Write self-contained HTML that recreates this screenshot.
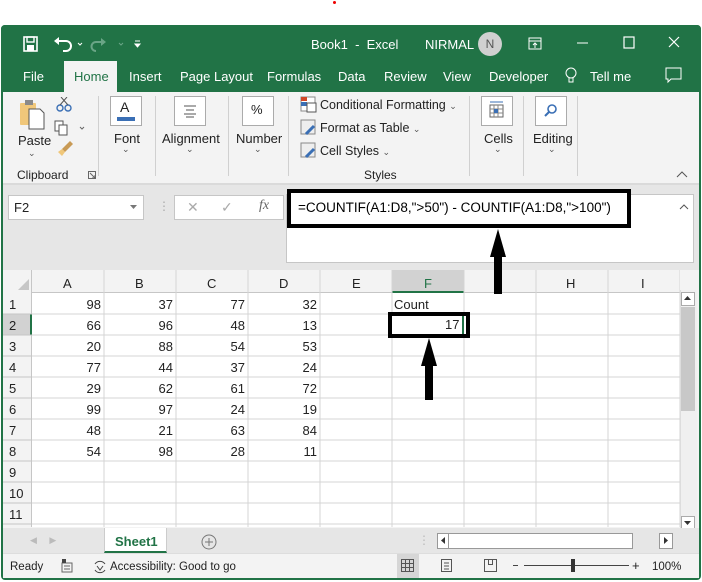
<!DOCTYPE html>
<html><head><style>
*{box-sizing:border-box;margin:0;padding:0}
body{width:702px;height:582px;background:#fff;font-family:"Liberation Sans",sans-serif;font-size:12px;color:#222;position:relative;overflow:hidden}
.a{position:absolute}
.t{position:absolute;white-space:nowrap}
.box{position:absolute;background:#fff;border:1px solid #ababab}
</style></head><body>
<div class="a" style="left:333px;top:1px;width:3px;height:3px;background:#e00;border-radius:50%"></div>
<div class="a" style="left:1px;top:25px;width:700px;height:555px;border:2px solid #217346;border-radius:4px;background:#f3f3f3"></div>
<div class="a" style="left:1px;top:25px;width:700px;height:67px;background:#217346;border-radius:4px 4px 0 0"></div>
<svg class="a" style="left:22px;top:34px" width="130" height="20" viewBox="0 0 130 20">
<rect x="2" y="3" width="13" height="14" fill="none" stroke="#fff" stroke-width="1.6"/><rect x="5" y="3" width="7" height="5" fill="none" stroke="#fff" stroke-width="1.4"/><rect x="5" y="11" width="7" height="6" fill="#fff"/>
<path d="M36 7 h8 a5 5 0 0 1 0 10 h-3" fill="none" stroke="#fff" stroke-width="2"/><path d="M32 7 l5-4 v8z" fill="#fff"/>
<path d="M56 9 l2 2 2-2" fill="none" stroke="#fff" stroke-width="1"/>
<path d="M80 8 h-6 a4 4 0 0 0 0 9" fill="none" stroke="#6aa586" stroke-width="2"/><path d="M84 8 l-5-4 v8z" fill="#6aa586"/>
<path d="M97 9 l2 2 2-2" fill="none" stroke="#6aa586" stroke-width="1"/>
<path d="M113 7 h5 M113 10 l2.5 3 2.5-3z" stroke="#fff" fill="#fff"/>
</svg>
<div class="t" style="left:311px;top:37px;color:#fff;font-size:13px">Book1 &nbsp;-&nbsp; Excel</div>
<div class="t" style="left:425px;top:37px;color:#fff;font-size:13px">NIRMAL</div>
<div class="a" style="left:478px;top:32px;width:24px;height:24px;border-radius:50%;background:#d0d0d0;color:#555;text-align:center;line-height:24px;font-size:12px">N</div>
<svg class="a" style="left:526px;top:34px" width="170" height="20"><rect x="3" y="4" width="12" height="11" fill="none" stroke="#fff"/><path d="M3 7h12M9 14V9M7 11l2-2 2 2" stroke="#fff" fill="none"/><path d="M51 9h11" stroke="#fff"/><rect x="98" y="3" width="10" height="11" fill="none" stroke="#fff" stroke-width="1.2"/><path d="M143 3l10 10M153 3l-10 10" stroke="#fff" stroke-width="1.2"/></svg>
<div class="a" style="left:64px;top:61px;width:53px;height:31px;background:#f3f3f3"></div>
<div class="t" style="left:23px;top:69px;color:#fff;font-size:13px">File</div>
<div class="t" style="left:74px;top:69px;color:#217346;font-size:13px">Home</div>
<div class="t" style="left:129px;top:69px;color:#fff;font-size:13px">Insert</div>
<div class="t" style="left:180px;top:69px;color:#fff;font-size:13px">Page Layout</div>
<div class="t" style="left:267px;top:69px;color:#fff;font-size:13px">Formulas</div>
<div class="t" style="left:338px;top:69px;color:#fff;font-size:13px">Data</div>
<div class="t" style="left:384px;top:69px;color:#fff;font-size:13px">Review</div>
<div class="t" style="left:443px;top:69px;color:#fff;font-size:13px">View</div>
<div class="t" style="left:489px;top:69px;color:#fff;font-size:13px">Developer</div>
<svg class="a" style="left:563px;top:66px" width="16" height="20"><circle cx="8" cy="7" r="5" fill="none" stroke="#fff"/><path d="M6 12v4h4v-4" stroke="#fff" fill="none"/></svg>
<div class="t" style="left:590px;top:69px;color:#fff;font-size:13px">Tell me</div>
<svg class="a" style="left:664px;top:66px" width="20" height="18"><path d="M2 2h15v11h-10l-3 3v-3h-2z" fill="none" stroke="#fff"/></svg>
<div class="a" style="left:3px;top:183px;width:696px;height:2px;background:#dadada"></div>
<svg class="a" style="left:18px;top:97px" width="75" height="70">
<rect x="2" y="6" width="16" height="22" fill="#f0c77a" rx="1"/><rect x="7" y="3" width="8" height="5" fill="#8a8a8a"/><path d="M11 12h11l4 4v16h-15z" fill="#fff" stroke="#555"/>
<circle cx="42" cy="11" r="3" fill="none" stroke="#3a6fb5" stroke-width="1.4"/><circle cx="50" cy="11" r="3" fill="none" stroke="#3a6fb5" stroke-width="1.4"/><path d="M42 8l7-8M50 8l-7-8" stroke="#555"/>
<rect x="37" y="24" width="8" height="10" fill="#fff" stroke="#555"/><rect x="41" y="28" width="8" height="10" fill="#fff" stroke="#555"/><path d="M62 30l2 2 2-2" stroke="#666" fill="none"/>
<path d="M44 52l8-8 3 3-8 8z" fill="#c89a55"/><path d="M40 55l4-3 3 3-3 4z" fill="#f0c77a"/>
</svg>
<div class="t" style="left:18px;top:133px;font-size:13px">Paste</div>
<div class="t" style="left:28px;top:148px;font-size:9px;color:#555">⌄</div>
<div class="t" style="left:17px;top:168px;font-size:12px">Clipboard</div>
<svg class="a" style="left:88px;top:171px" width="8" height="8"><rect x="0.5" y="0.5" width="7" height="7" fill="none" stroke="#666"/><path d="M2 2l5 5M4 7h3V4" stroke="#666" fill="none"/></svg>
<div class="a" style="left:98px;top:96px;width:1px;height:80px;background:#d0d0d0"></div>
<div class="box" style="left:110px;top:96px;width:32px;height:30px"></div>
<div class="t" style="left:120px;top:99px;font-size:14px">A</div>
<div class="a" style="left:117px;top:117px;width:18px;height:4px;background:#3a6fb5"></div>
<div class="t" style="left:114px;top:131px;font-size:13px">Font</div>
<div class="t" style="left:122px;top:144px;font-size:9px;color:#555">⌄</div>
<div class="a" style="left:155px;top:96px;width:1px;height:80px;background:#d0d0d0"></div>
<div class="box" style="left:174px;top:96px;width:32px;height:30px"></div>
<svg class="a" style="left:182px;top:104px" width="16" height="14"><path d="M2 2h12M4 6h8M2 10h12M4 13h8" stroke="#555"/></svg>
<div class="t" style="left:162px;top:131px;font-size:13px">Alignment</div>
<div class="t" style="left:186px;top:144px;font-size:9px;color:#555">⌄</div>
<div class="a" style="left:228px;top:96px;width:1px;height:80px;background:#d0d0d0"></div>
<div class="box" style="left:242px;top:96px;width:32px;height:30px"></div>
<div class="t" style="left:251px;top:102px;font-size:13px">%</div>
<div class="t" style="left:236px;top:131px;font-size:13px">Number</div>
<div class="t" style="left:254px;top:144px;font-size:9px;color:#555">⌄</div>
<div class="a" style="left:288px;top:96px;width:1px;height:80px;background:#d0d0d0"></div>
<svg class="a" style="left:300px;top:96px" width="18" height="66">
<rect x="1" y="1" width="14" height="14" fill="#fff" stroke="#888"/><rect x="1" y="1" width="6" height="4" fill="#d24726"/><rect x="1" y="6" width="6" height="4" fill="#3a6fb5"/><rect x="7" y="7" width="9" height="9" fill="#fff" stroke="#555"/>
<rect x="1" y="24" width="14" height="14" fill="#eee" stroke="#888"/><path d="M6 38l8-8" stroke="#3a6fb5" stroke-width="3"/>
<rect x="1" y="47" width="14" height="14" fill="#eee" stroke="#888"/><path d="M6 61l8-8" stroke="#3a6fb5" stroke-width="3"/>
</svg>
<div class="t" style="left:320px;top:98px;font-size:12.5px">Conditional Formatting <span style="font-size:9px;color:#555">⌄</span></div>
<div class="t" style="left:320px;top:121px;font-size:12.5px">Format as Table <span style="font-size:9px;color:#555">⌄</span></div>
<div class="t" style="left:320px;top:144px;font-size:12.5px">Cell Styles <span style="font-size:9px;color:#555">⌄</span></div>
<div class="t" style="left:364px;top:168px;font-size:12px">Styles</div>
<div class="a" style="left:469px;top:96px;width:1px;height:80px;background:#d0d0d0"></div>
<div class="box" style="left:481px;top:96px;width:32px;height:30px"></div>
<svg class="a" style="left:488px;top:100px" width="18" height="20"><path d="M2 2h13" stroke="#3a6fb5"/><rect x="2" y="5" width="13" height="12" fill="#fff" stroke="#666"/><path d="M2 9h13M2 13h13M6 5v12M10 5v12" stroke="#888"/><rect x="6" y="9" width="4" height="4" fill="#3a6fb5"/></svg>
<div class="t" style="left:484px;top:131px;font-size:13px">Cells</div>
<div class="t" style="left:494px;top:144px;font-size:9px;color:#555">⌄</div>
<div class="a" style="left:523px;top:96px;width:1px;height:80px;background:#d0d0d0"></div>
<div class="box" style="left:535px;top:96px;width:32px;height:30px"></div>
<svg class="a" style="left:542px;top:102px" width="18" height="18"><circle cx="10" cy="7" r="4" fill="none" stroke="#3a6fb5" stroke-width="1.6"/><path d="M7 10l-4 4" stroke="#3a6fb5" stroke-width="2"/></svg>
<div class="t" style="left:533px;top:131px;font-size:13px">Editing</div>
<div class="t" style="left:548px;top:144px;font-size:9px;color:#555">⌄</div>
<div class="a" style="left:577px;top:96px;width:1px;height:80px;background:#d0d0d0"></div>
<svg class="a" style="left:676px;top:170px" width="12" height="8"><path d="M1 7l5-5 5 5" stroke="#555" fill="none"/></svg>
<div class="a" style="left:3px;top:185px;width:696px;height:85px;background:#e6e6e6"></div>
<div class="box" style="left:8px;top:195px;width:136px;height:25px;border-color:#c6c6c6"></div>
<div class="t" style="left:14px;top:200px;font-size:13px">F2</div>
<svg class="a" style="left:130px;top:205px" width="8" height="5"><path d="M0 0h7l-3.5 4z" fill="#777"/></svg>
<div class="t" style="left:158px;top:199px;color:#aaa">⋮</div>
<div class="box" style="left:174px;top:195px;width:110px;height:25px;border-color:#c6c6c6"></div>
<div class="t" style="left:187px;top:199px;color:#aaa;font-size:14px">✕</div>
<div class="t" style="left:221px;top:199px;color:#aaa;font-size:14px">✓</div>
<div class="t" style="left:259px;top:198px;color:#666;font-style:italic;font-family:'Liberation Serif',serif;font-size:14px">fx</div>
<div class="box" style="left:286px;top:194px;width:408px;height:69px;border-color:#c6c6c6"></div>
<div class="a" style="left:287px;top:189px;width:344px;height:39px;border:4px solid #000;background:#fff"></div>
<div class="t" style="left:298px;top:200px;font-size:13.5px;color:#000">=COUNTIF(A1:D8,"&gt;50") - COUNTIF(A1:D8,"&gt;100")</div>
<svg class="a" style="left:679px;top:204px" width="10" height="6"><path d="M1 5l4-4 4 4" stroke="#555" fill="none"/></svg>
<div class="a" style="left:3px;top:270px;width:677px;height:257px;background:#fff"></div>
<div class="a" style="left:3px;top:270px;width:677px;height:23px;background:#f3f3f3;border-bottom:1px solid #c6c6c6"></div>
<div class="a" style="left:3px;top:270px;width:29px;height:257px;background:#f3f3f3;border-right:1px solid #c6c6c6"></div>
<svg class="a" style="left:16px;top:279px" width="14" height="12"><path d="M13 0v11H2z" fill="#c6c6c6"/></svg>
<div class="a" style="left:392px;top:270px;width:72px;height:23px;background:#d2d2d2;border-bottom:2px solid #217346"></div>
<div class="a" style="left:3px;top:314px;width:29px;height:21px;background:#d2d2d2;border-right:2px solid #217346"></div>
<svg class="a" style="left:32px;top:270px" width="648" height="257">
<g stroke="#d4d4d4">
<path d="M72 0v257M144 0v257M216 0v257M288 0v257M360 0v257M432 0v257M504 0v257M576 0v257M648 0v257"/>
<path d="M0 44h648M0 65h648M0 86h648M0 107h648M0 128h648M0 149h648M0 170h648M0 191h648M0 212h648M0 233h648M0 254h648"/>
</g></svg>
<svg class="a" style="left:3px;top:293px" width="29" height="234"><g stroke="#c6c6c6"><path d="M0 21h29M0 42h29M0 63h29M0 84h29M0 105h29M0 126h29M0 147h29M0 168h29M0 189h29M0 210h29M0 231h29"/></g></svg>
<div class="t" style="left:63px;top:276px;font-size:13px">A</div>
<div class="t" style="left:135px;top:276px;font-size:13px">B</div>
<div class="t" style="left:207px;top:276px;font-size:13px">C</div>
<div class="t" style="left:279px;top:276px;font-size:13px">D</div>
<div class="t" style="left:352px;top:276px;font-size:13px">E</div>
<div class="t" style="left:424px;top:276px;font-size:13px;color:#217346">F</div>
<div class="t" style="left:566px;top:276px;font-size:13px">H</div>
<div class="t" style="left:641px;top:276px;font-size:13px">I</div>
<div class="t" style="left:9px;top:294px;font-size:13px;line-height:21px">1<br>2<br>3<br>4<br>5<br>6<br>7<br>8<br>9<br>10<br>11</div>
<div class="t" style="left:33px;top:294px;width:68px;text-align:right;font-size:13px;line-height:21px">98<br>66<br>20<br>77<br>29<br>99<br>48<br>54</div>
<div class="t" style="left:105px;top:294px;width:68px;text-align:right;font-size:13px;line-height:21px">37<br>96<br>88<br>44<br>62<br>97<br>21<br>98</div>
<div class="t" style="left:177px;top:294px;width:68px;text-align:right;font-size:13px;line-height:21px">77<br>48<br>54<br>37<br>61<br>24<br>63<br>28</div>
<div class="t" style="left:249px;top:294px;width:68px;text-align:right;font-size:13px;line-height:21px">32<br>13<br>53<br>24<br>72<br>19<br>84<br>11</div>
<div class="t" style="left:394px;top:297px;font-size:13px">Count</div>
<div class="a" style="left:388px;top:312px;width:82px;height:26px;border:4px solid #000;background:#fff"></div>
<div class="t" style="left:445px;top:317px;font-size:13px">17</div>
<div class="a" style="left:462px;top:316px;width:2px;height:18px;background:#217346"></div>
<svg class="a" style="left:480px;top:226px" width="40" height="70"><path d="M18 3l8 28h-4v37h-8v-37h-4z" fill="#000"/></svg>
<svg class="a" style="left:410px;top:336px" width="40" height="66"><path d="M19 2l8 28h-4v34h-8v-34h-4z" fill="#000"/></svg>
<div class="a" style="left:680px;top:290px;width:17px;height:240px;background:#f0f0f0;border-left:1px solid #ddd"></div>
<div class="box" style="left:681px;top:292px;width:14px;height:14px"></div>
<svg class="a" style="left:684px;top:296px" width="8" height="5"><path d="M0 4h7L3.5 0z" fill="#333"/></svg>
<div class="a" style="left:681px;top:307px;width:14px;height:104px;background:#c8c8c8"></div>
<div class="box" style="left:681px;top:516px;width:14px;height:14px"></div>
<svg class="a" style="left:684px;top:521px" width="8" height="5"><path d="M0 0h7L3.5 4z" fill="#333"/></svg>
<div class="a" style="left:3px;top:528px;width:696px;height:25px;background:#e6e6e6"></div>
<div class="t" style="left:30px;top:535px;color:#bbb;font-size:9px">◀ &nbsp;&nbsp;&nbsp;&nbsp;▶</div>
<div class="a" style="left:104px;top:528px;width:63px;height:25px;background:#fff;border-bottom:2px solid #217346;border-left:1px solid #ccc;border-right:1px solid #ccc"></div>
<div class="t" style="left:115px;top:534px;color:#217346;font-weight:bold;font-size:13px">Sheet1</div>
<svg class="a" style="left:201px;top:534px" width="16" height="16"><circle cx="8" cy="8" r="7" fill="none" stroke="#777"/><path d="M8 4v8M4 8h8" stroke="#777"/></svg>
<div class="t" style="left:418px;top:533px;color:#bbb">⋮</div>
<div class="box" style="left:437px;top:533px;width:196px;height:16px;border-color:#999"></div>
<div class="a" style="left:438px;top:534px;width:11px;height:14px;border-right:1px solid #999;background:#fff"></div>
<svg class="a" style="left:441px;top:537px" width="5" height="8"><path d="M4 0v7L0 3.5z" fill="#333"/></svg>
<div class="box" style="left:659px;top:533px;width:14px;height:16px;border-color:#999"></div>
<svg class="a" style="left:664px;top:537px" width="5" height="8"><path d="M0 0v7l4-3.5z" fill="#333"/></svg>
<div class="a" style="left:3px;top:553px;width:696px;height:25px;background:#f3f3f3;border-top:1px solid #ddd"></div>
<div class="t" style="left:10px;top:561px;font-size:11.5px">Ready</div>
<svg class="a" style="left:61px;top:559px" width="12" height="14"><rect x="1" y="4" width="10" height="9" fill="none" stroke="#666"/><rect x="1" y="0" width="4" height="4" fill="#444"/><path d="M3 7h6M3 10h6" stroke="#666"/></svg>
<svg class="a" style="left:92px;top:559px" width="16" height="16"><path d="M3 5a6 6 0 0 1 10 0M13 11a6 6 0 0 1-10 0" fill="none" stroke="#444"/><path d="M5 7l3 4 3-4" stroke="#444" fill="none"/></svg>
<div class="t" style="left:110px;top:561px;font-size:11.5px">Accessibility: Good to go</div>
<div class="a" style="left:397px;top:554px;width:22px;height:24px;background:#d6d6d6"></div>
<svg class="a" style="left:401px;top:559px" width="14" height="14"><rect x="0.5" y="0.5" width="12" height="12" fill="none" stroke="#555"/><path d="M4.5 0v13M8.5 0v13M0 4.5h13M0 8.5h13" stroke="#555"/></svg>
<svg class="a" style="left:441px;top:559px" width="12" height="14"><rect x="0.5" y="0.5" width="10" height="12" fill="none" stroke="#555"/><path d="M3 4h5M3 7h5M3 10h5" stroke="#555"/></svg>
<svg class="a" style="left:484px;top:559px" width="14" height="14"><path d="M0.5 0.5h12v12h-12zM4.5 0.5v5h4v-5" fill="none" stroke="#555"/></svg>
<div class="a" style="left:513px;top:565px;width:5px;height:1px;background:#444"></div>
<div class="a" style="left:524px;top:565px;width:105px;height:1px;background:#444"></div>
<div class="a" style="left:571px;top:559px;width:4px;height:13px;background:#333"></div>
<div class="t" style="left:632px;top:558px;font-size:13px">+</div>
<div class="t" style="left:652px;top:561px;font-size:11.5px">100%</div>
</body></html>
